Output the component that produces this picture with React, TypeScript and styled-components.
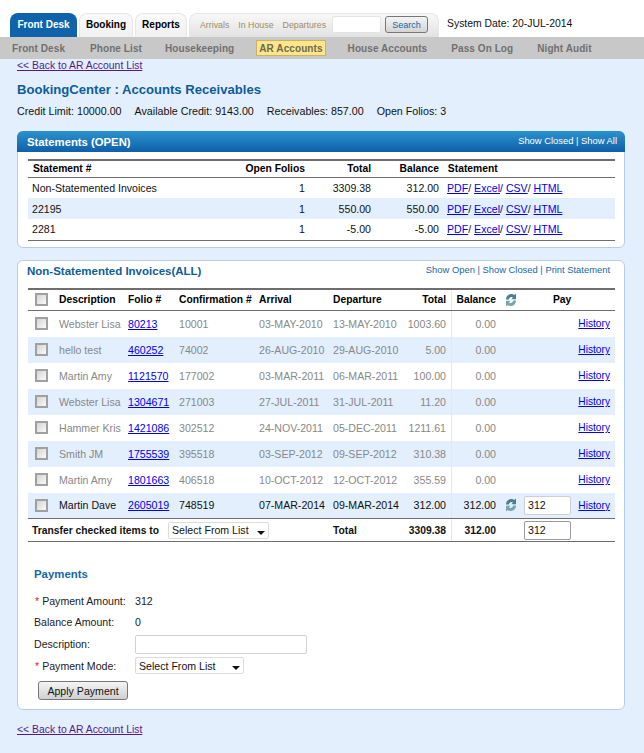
import React from 'react';
import styled, { createGlobalStyle } from 'styled-components';

const GlobalStyle = createGlobalStyle`
html, body {
  margin: 0;
  padding: 0;
  background: #e3effd;
  font-family: "Liberation Sans", Arial, sans-serif;
  font-size: 10.6px;
  color: #111;
}
a { color: #0000ee; }
`;

const Page = styled.div`
  width: 644px;
  height: 753px;
  overflow: hidden;
`;

const TopBar = styled.div`
  height: 37px;
  background: #fff;
  display: flex;
  align-items: flex-end;
  padding-left: 10px;
  box-sizing: border-box;
`;

const Tab = styled.div<{ $active?: boolean; $w: number }>`
  width: ${p => p.$w}px;
  height: 24px;
  margin-right: 2px;
  box-sizing: border-box;
  border-radius: 8px 8px 0 0;
  display: flex;
  align-items: center;
  justify-content: center;
  padding-bottom: 2px;
  font-size: 10px;
  font-weight: bold;
  color: ${p => (p.$active ? '#fff' : '#000')};
  background: ${p => (p.$active ? '#0f63ab' : 'linear-gradient(#fbfbfb, #f0f0f0)')};
  border: ${p => (p.$active ? 'none' : '1px solid #e6e6e6')};
  border-bottom: none;
`;

const SearchTab = styled.div`
  width: 250px;
  height: 24px;
  flex-shrink: 0;
  box-sizing: border-box;
  border-radius: 8px 8px 0 0;
  border: 1px solid #e6e6e6;
  border-bottom: none;
  background: linear-gradient(#f8f8f8, #e2e2e2);
  display: flex;
  align-items: center;
  padding: 0 0 2px 10px;
  font-size: 8.8px;
  color: #a08a68;
  white-space: nowrap;
`;

const SearchLink = styled.span`
  margin-right: 9px;
`;

const SearchInput = styled.div`
  width: 49px;
  height: 17px;
  margin-left: -3px;
  flex-shrink: 0;
  background: #fff;
  border: 1px solid #e4e4e4;
  border-radius: 2px;
  box-sizing: border-box;
`;

const SearchButton = styled.div`
  width: 43px;
  height: 17px;
  margin-left: 4px;
  flex-shrink: 0;
  box-sizing: border-box;
  border: 1px solid #777;
  border-radius: 3px;
  background: linear-gradient(#f4f4f4, #d4d4d4);
  color: #1467a8;
  font-size: 9px;
  display: flex;
  align-items: center;
  justify-content: center;
`;

const SystemDate = styled.div`
  margin-left: 8px;
  height: 24px;
  padding-bottom: 3px;
  box-sizing: border-box;
  display: flex;
  align-items: center;
  font-size: 10.4px;
  color: #111;
  white-space: nowrap;
`;

const SubNav = styled.div`
  height: 22px;
  background: #c8c8c8;
  display: flex;
  align-items: center;
  font-size: 10px;
  letter-spacing: 0.08px;
  font-weight: bold;
  color: #707070;
  padding-left: 12px;
`;

const SubItem = styled.div<{ $left: number }>`
  margin-left: ${p => p.$left}px;
  white-space: nowrap;
`;

const SubActive = styled.div`
  margin-left: 22px;
  height: 16px;
  box-sizing: border-box;
  padding: 0 2px;
  border: 1px solid #c9b263;
  background: #fde68a;
  color: #6b6b50;
  display: flex;
  align-items: center;
  white-space: nowrap;
`;

const Content = styled.div`
  padding: 0 19px 0 17px;
`;

const BackLink = styled.a`
  display: block;
  color: #551a8b;
  font-size: 10.4px;
  line-height: 13px;
  text-decoration: underline;
`;

const Title = styled.h1`
  margin: 9px 0 0;
  font-size: 13.1px;
  line-height: 18px;
  font-weight: bold;
  color: #0f5c98;
`;

const Summary = styled.div`
  display: flex;
  gap: 13px;
  margin-top: 5px;
  line-height: 14px;
  font-size: 10.7px;
  color: #111;
`;

const Panel = styled.section<{ $top: number }>`
  margin-top: ${p => p.$top}px;
  background: #fff;
  border: 1px solid #b9cde2;
  border-radius: 6px;
  padding: 0 9px 0 10px;
`;

const PanelHead = styled.div`
  margin: -1px -10px 0 -11px;
  height: 21px;
  border-radius: 6px 6px 0 0;
  background: linear-gradient(#2b93cf, #0f5fa8);
  display: flex;
  justify-content: space-between;
  padding: 0 8px 0 10px;
  color: #fff;
`;

const PanelHeadTitle = styled.div`
  font-size: 11.3px;
  font-weight: bold;
  line-height: 22px;
`;

const PanelHeadLinks = styled.div`
  font-size: 9.4px;
  line-height: 19px;
`;

const PlainHead = styled.div`
  height: 27px;
  display: flex;
  justify-content: space-between;
  color: #0f5c98;
  margin-left: -1px;
  padding-right: 5px;
`;

const PlainTitle = styled.div`
  font-size: 11.5px;
  font-weight: bold;
  line-height: 21px;
`;

const PlainLinks = styled.div`
  font-size: 9.4px;
  line-height: 18px;
  color: #1467a8;
`;

const Table = styled.table<{ $top?: number }>`
  width: 587px;
  margin-top: ${p => p.$top ?? 0}px;
  border-collapse: collapse;
  table-layout: fixed;
  border-top: 2px solid #6e6e6e;
  border-bottom: 1px solid #6e6e6e;

  th {
    font-size: 10.3px;
    font-weight: bold;
    color: #000;
    border-bottom: 1px solid #6e6e6e;
    padding: 0 2px;
    text-align: left;
    white-space: nowrap;
  }
  td {
    padding: 0 2px;
    white-space: nowrap;
    overflow: hidden;
  }
`;

const StatementHead = styled.tr`
  height: 17px;
  th:first-child { padding-left: 5px; }
`;

const Row = styled.tr<{ $alt?: boolean; $h: number; $muted?: boolean }>`
  height: ${p => p.$h}px;
  background: ${p => (p.$alt ? '#e3effd' : 'transparent')};
  color: ${p => (p.$muted ? '#888' : '#111')};
`;

const InvoiceHead = styled.tr`
  height: 22px;
`;

const NameCell = styled.td`
  && { padding-left: 4px; }
`;

const LinksCell = styled.td`
  && { padding-left: 4px; }
`;

const Num = styled.td`
  && { text-align: right; padding-right: 4px; }
`;

const NumHead = styled.th`
  && { text-align: right; padding-right: 4px; }
`;

const Divided = styled(Num)`
  box-shadow: inset 1px 0 0 #e6e6e6;
`;

const DividedHead = styled(NumHead)`
  box-shadow: inset 1px 0 0 #e6e6e6;
`;

const PayHead = styled.th`
  && { padding-left: 32px; }
`;

const HistoryCell = styled.td`
  && { text-align: right; padding-right: 5px; font-size: 10.2px; }
`;

const TotalRow = styled.tr`
  height: 23px;
  font-weight: bold;
  font-size: 10.3px;
  color: #111;
  border-top: 1px solid #6e6e6e;
`;

const TransferCell = styled.td`
  && { padding-left: 4px; }
`;

const TransferInner = styled.div`
  display: flex;
  align-items: center;
  gap: 9px;
`;

const Check = styled.span`
  display: block;
  width: 13px;
  height: 13px;
  margin-left: 5px;
  box-sizing: border-box;
  border: 2px solid #a0a0a0;
  background: linear-gradient(135deg, #d4d4d4, #fafafa);
`;

const PayInput = styled.div<{ $dark?: boolean }>`
  width: 47px;
  height: 19px;
  margin-left: 1px;
  box-sizing: border-box;
  background: #fff;
  border: 1px solid ${p => (p.$dark ? '#9a9a9a' : '#cfcfcf')};
  border-radius: 2px;
  padding-left: 3px;
  line-height: 17px;
  font-size: 10.6px;
  font-weight: normal;
  color: #111;
`;

const Select = styled.div<{ $w: number }>`
  width: ${p => p.$w}px;
  height: 17px;
  box-sizing: border-box;
  background: #fff;
  border: 1px solid #dcdcdc;
  border-radius: 2px;
  padding: 0 3px 0 3px;
  display: flex;
  align-items: center;
  justify-content: space-between;
  font-size: 10.6px;
  font-weight: normal;
  color: #111;
`;

const Caret = styled.span`
  width: 0;
  height: 0;
  margin: 5px 0 0 0;
  border-left: 4px solid transparent;
  border-right: 4px solid transparent;
  border-top: 4px solid #111;
`;

const PanelSpacer = styled.div`
  height: 6px;
`;

const Payments = styled.div`
  padding: 25px 0 9px 6px;
`;

const PaymentsTitle = styled.h2`
  margin: 0 0 9px;
  font-size: 11.4px;
  line-height: 14px;
  font-weight: bold;
  color: #1467a8;
`;

const FormRow = styled.div<{ $h: number }>`
  display: grid;
  grid-template-columns: 101px auto;
  justify-items: start;
  align-items: center;
  height: ${p => p.$h}px;
  color: #222;
`;

const Required = styled.span`
  color: #e02020;
  margin: 0 3px 0 1px;
`;

const TextBox = styled.div`
  width: 172px;
  height: 19px;
  box-sizing: border-box;
  background: #fff;
  border: 1px solid #d2d2d2;
  border-radius: 2px;
`;

const ApplyButton = styled.button`
  display: block;
  width: 90px;
  height: 19px;
  margin: 5px 0 0 4px;
  padding: 0;
  font-family: inherit;
  font-size: 10.6px;
  color: #111;
  border: 1px solid #777;
  border-radius: 3px;
  background: linear-gradient(#f5f5f5, #cfcfcf);
`;

const BottomLink = styled(BackLink)`
  margin-top: 13px;
`;

const SplitLine = styled.div`
  display: flex;
  justify-content: space-between;
  padding-right: 3px;
`;

const IconSvg = styled.svg`
  display: block;
  margin-left: 3px;
`;

function RefreshIcon() {
  return (
    <IconSvg width="12" height="14" viewBox="0 0 12 14">
      <path d="M1 6.5C1 3 3.5 1 6.5 1C7.6 1 8.6 1.3 9.3 2L11 .6V6.2H6.4L8 4.6C7.6 4.2 7 4 6.5 4C5 4 4.2 5 3.8 6.5Z" fill="#4a7f90" />
      <path d="M11 7.5C11 11 8.5 13 5.5 13C4.4 13 3.4 12.7 2.7 12L1 13.4V7.8H5.6L4 9.4C4.4 9.8 5 10 5.5 10C7 10 7.8 9 8.2 7.5Z" fill="#7ba3ae" />
    </IconSvg>
  );
}

const statements = [
  { name: 'Non-Statemented Invoices', folios: 1, total: '3309.38', balance: '312.00' },
  { name: '22195', folios: 1, total: '550.00', balance: '550.00' },
  { name: '2281', folios: 1, total: '-5.00', balance: '-5.00' },
];

const invoices = [
  ['Webster Lisa', '80213', '10001', '03-MAY-2010', '13-MAY-2010', '1003.60', '0.00'],
  ['hello test', '460252', '74002', '26-AUG-2010', '29-AUG-2010', '5.00', '0.00'],
  ['Martin Amy', '1121570', '177002', '03-MAR-2011', '06-MAR-2011', '100.00', '0.00'],
  ['Webster Lisa', '1304671', '271003', '27-JUL-2011', '31-JUL-2011', '11.20', '0.00'],
  ['Hammer Kris', '1421086', '302512', '24-NOV-2011', '05-DEC-2011', '1211.61', '0.00'],
  ['Smith JM', '1755539', '395518', '03-SEP-2012', '09-SEP-2012', '310.38', '0.00'],
  ['Martin Amy', '1801663', '406518', '10-OCT-2012', '12-OCT-2012', '355.59', '0.00'],
  ['Martin Dave', '2605019', '748519', '07-MAR-2014', '09-MAR-2014', '312.00', '312.00'],
];

export default function App() {
  return (
    <Page>
      <GlobalStyle />
      <TopBar>
        <Tab $active $w={67}>Front Desk</Tab>
        <Tab $w={54}>Booking</Tab>
        <Tab $w={52}>Reports</Tab>
        <SearchTab>
          <SearchLink>Arrivals</SearchLink>
          <SearchLink>In House</SearchLink>
          <SearchLink>Departures</SearchLink>
          <SearchInput />
          <SearchButton>Search</SearchButton>
        </SearchTab>
        <SystemDate>System Date: 20-JUL-2014</SystemDate>
      </TopBar>
      <SubNav>
        <SubItem $left={0}>Front Desk</SubItem>
        <SubItem $left={25}>Phone List</SubItem>
        <SubItem $left={23}>Housekeeping</SubItem>
        <SubActive>AR Accounts</SubActive>
        <SubItem $left={22}>House Accounts</SubItem>
        <SubItem $left={24}>Pass On Log</SubItem>
        <SubItem $left={24}>Night Audit</SubItem>
      </SubNav>
      <Content>
        <BackLink href="#">&lt;&lt; Back to AR Account List</BackLink>
        <Title>BookingCenter : Accounts Receivables</Title>
        <Summary>
          <span>Credit Limit: 10000.00</span>
          <span>Available Credit: 9143.00</span>
          <span>Receivables: 857.00</span>
          <span>Open Folios: 3</span>
        </Summary>

        <Panel $top={13}>
          <PanelHead>
            <PanelHeadTitle>Statements (OPEN)</PanelHeadTitle>
            <PanelHeadLinks>Show Closed | Show All</PanelHeadLinks>
          </PanelHead>
          <Table $top={7}>
            <colgroup>
              <col width="202" />
              <col width="79" />
              <col width="66" />
              <col width="68" />
              <col width="172" />
            </colgroup>
            <thead>
              <StatementHead>
                <th>Statement #</th>
                <NumHead>Open Folios</NumHead>
                <NumHead>Total</NumHead>
                <NumHead>Balance</NumHead>
                <th>&nbsp;Statement</th>
              </StatementHead>
            </thead>
            <tbody>
              {statements.map((s, i) => (
                <Row key={s.name} $alt={i === 1} $h={21}>
                  <NameCell>{s.name}</NameCell>
                  <Num>{s.folios}</Num>
                  <Num>{s.total}</Num>
                  <Num>{s.balance}</Num>
                  <LinksCell>
                    <a href="#">PDF</a>/ <a href="#">Excel</a>/ <a href="#">CSV</a>/ <a href="#">HTML</a>
                  </LinksCell>
                </Row>
              ))}
            </tbody>
          </Table>
          <PanelSpacer />
        </Panel>

        <Panel $top={12}>
          <PlainHead>
            <PlainTitle>Non-Statemented Invoices(ALL)</PlainTitle>
            <PlainLinks>Show Open | Show Closed | Print Statement</PlainLinks>
          </PlainHead>
          <Table>
            <colgroup>
              <col width="29" />
              <col width="69" />
              <col width="51" />
              <col width="80" />
              <col width="74" />
              <col width="120" />
              <col width="49" />
              <col width="21" />
              <col width="54" />
              <col width="40" />
            </colgroup>
            <thead>
              <InvoiceHead>
                <th><Check /></th>
                <th>Description</th>
                <th>Folio #</th>
                <th>Confirmation #</th>
                <th>Arrival</th>
                <th>
                  <SplitLine>
                    <span>Departure</span>
                    <span>Total</span>
                  </SplitLine>
                </th>
                <DividedHead>Balance</DividedHead>
                <th><RefreshIcon /></th>
                <PayHead>Pay</PayHead>
                <th />
              </InvoiceHead>
            </thead>
            <tbody>
              {invoices.map((r, i) => {
                const live = i === invoices.length - 1;
                return (
                  <Row key={r[1]} $alt={i % 2 === 1} $h={26} $muted={!live}>
                    <td><Check /></td>
                    <td>{r[0]}</td>
                    <td><a href="#">{r[1]}</a></td>
                    <td>{r[2]}</td>
                    <td>{r[3]}</td>
                    <td>
                      <SplitLine>
                        <span>{r[4]}</span>
                        <span>{r[5]}</span>
                      </SplitLine>
                    </td>
                    <Divided>{r[6]}</Divided>
                    <td>{live && <RefreshIcon />}</td>
                    <td>{live && <PayInput>312</PayInput>}</td>
                    <HistoryCell><a href="#">History</a></HistoryCell>
                  </Row>
                );
              })}
              <TotalRow>
                <TransferCell colSpan={5}>
                  <TransferInner>
                    Transfer checked items to
                    <Select $w={101}>Select From List<Caret /></Select>
                  </TransferInner>
                </TransferCell>
                <td>
                  <SplitLine>
                    <span>Total</span>
                    <span>3309.38</span>
                  </SplitLine>
                </td>
                <Divided>312.00</Divided>
                <td />
                <td><PayInput $dark>312</PayInput></td>
                <td />
              </TotalRow>
            </tbody>
          </Table>
          <Payments>
            <PaymentsTitle>Payments</PaymentsTitle>
            <FormRow $h={21}><span><Required>*</Required>Payment Amount:</span><span>312</span></FormRow>
            <FormRow $h={22}><span>Balance Amount:</span><span>0</span></FormRow>
            <FormRow $h={22}><span>Description:</span><TextBox /></FormRow>
            <FormRow $h={21}><span><Required>*</Required>Payment Mode:</span><Select $w={109}>Select From List<Caret /></Select></FormRow>
            <ApplyButton>Apply Payment</ApplyButton>
          </Payments>
        </Panel>
        <BottomLink href="#">&lt;&lt; Back to AR Account List</BottomLink>
      </Content>
    </Page>
  );
}
